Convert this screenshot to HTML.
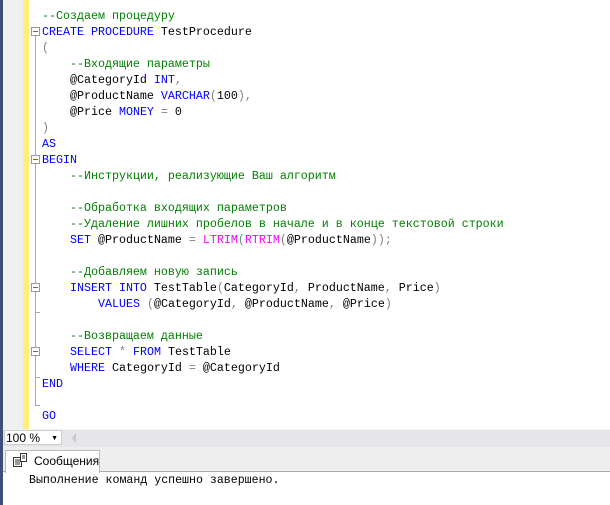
<!DOCTYPE html>
<html><head><meta charset="utf-8"><style>
body{margin:0;width:610px;height:505px;overflow:hidden;background:#fff;position:relative;font-family:"Liberation Mono",monospace}
.l{position:absolute;left:42px;height:16px;line-height:16px;font-size:11.67px;white-space:pre;color:#000}
.c{color:#008000}.k{color:#0000ff}.g{color:#808080}.m{color:#ff00ff}
.box{position:absolute;left:31px;width:7px;height:7px;border:1px solid #999;background:#fff}
.box:after{content:"";position:absolute;left:1px;top:3px;width:5px;height:1px;background:#666}
.tick{position:absolute;left:35px;width:5px;height:1px;background:#aaa}
</style></head><body>
<div style="position:absolute;left:0;top:0;width:3px;height:505px;background:#3b4f7a"></div>
<div style="position:absolute;left:3px;top:0;width:20px;height:430px;background:#f0f0f0"></div>
<div style="position:absolute;left:23px;top:0;width:6px;height:430px;background:#ffef7a"></div>
<div style="position:absolute;left:35px;top:36px;width:1px;height:370px;background:#aaa"></div>
<div class="tick" style="top:405px"></div>
<div class="tick" style="top:312px"></div>
<div class="tick" style="top:377px"></div>
<div class="box" style="top:27px"></div>
<div class="box" style="top:155px"></div>
<div class="box" style="top:283px"></div>
<div class="box" style="top:347px"></div>

<div class="l c" style="top:8px">--Создаем процедуру</div>
<div class="l" style="top:24px"><span class="k">CREATE PROCEDURE</span> TestProcedure</div>
<div class="l g" style="top:40px">(</div>
<div class="l c" style="top:56px">    --Входящие параметры</div>
<div class="l" style="top:72px">    @CategoryId <span class="k">INT</span><span class="g">,</span></div>
<div class="l" style="top:88px">    @ProductName <span class="k">VARCHAR</span><span class="g">(</span>100<span class="g">),</span></div>
<div class="l" style="top:104px">    @Price <span class="k">MONEY</span> <span class="g">=</span> 0</div>
<div class="l g" style="top:120px">)</div>
<div class="l k" style="top:136px">AS</div>
<div class="l k" style="top:152px">BEGIN</div>
<div class="l c" style="top:168px">    --Инструкции, реализующие Ваш алгоритм</div>
<div class="l c" style="top:200px">    --Обработка входящих параметров</div>
<div class="l c" style="top:216px">    --Удаление лишних пробелов в начале и в конце текстовой строки</div>
<div class="l" style="top:232px">    <span class="k">SET</span> @ProductName <span class="g">=</span> <span class="m">LTRIM</span><span class="g">(</span><span class="m">RTRIM</span><span class="g">(</span>@ProductName<span class="g">));</span></div>
<div class="l c" style="top:264px">    --Добавляем новую запись</div>
<div class="l" style="top:280px">    <span class="k">INSERT INTO</span> TestTable<span class="g">(</span>CategoryId<span class="g">,</span> ProductName<span class="g">,</span> Price<span class="g">)</span></div>
<div class="l" style="top:296px">        <span class="k">VALUES</span> <span class="g">(</span>@CategoryId<span class="g">,</span> @ProductName<span class="g">,</span> @Price<span class="g">)</span></div>
<div class="l c" style="top:328px">    --Возвращаем данные</div>
<div class="l" style="top:344px">    <span class="k">SELECT</span> <span class="g">*</span> <span class="k">FROM</span> TestTable</div>
<div class="l" style="top:360px">    <span class="k">WHERE</span> CategoryId <span class="g">=</span> @CategoryId</div>
<div class="l k" style="top:376px">END</div>
<div class="l k" style="top:408px">GO</div>

<div style="position:absolute;left:3px;top:429px;width:607px;height:18px;background:#e6e6ea;border-top:1px solid #f4f4f4"></div>
<div style="position:absolute;left:4px;top:430px;width:58px;height:15px;background:#fff;border:1px solid #ccc;font:12px 'Liberation Sans',sans-serif;line-height:15px;padding-left:1px;box-sizing:border-box">100 %<span style="position:absolute;right:3px;top:0;font-size:7px">▼</span></div>
<div style="position:absolute;left:72px;top:433px;width:0;height:0;border-top:5px solid transparent;border-bottom:5px solid transparent;border-right:4px solid #c8c8c8"></div>
<div style="position:absolute;left:3px;top:447px;width:607px;height:24px;background:#eeeeee;border-bottom:1px solid #aaa"></div>
<div style="position:absolute;left:5px;top:450px;width:95px;height:23px;background:#fff;border:1px solid #bbb;border-bottom:none;box-sizing:border-box"></div>
<svg style="position:absolute;left:12px;top:452px" width="16" height="16" viewBox="0 0 16 16"><rect x="1.5" y="5.5" width="8" height="9" fill="#fff" stroke="#333"/><path d="M3 8h5M3 10h5M3 12h5" stroke="#333"/><rect x="8.5" y="1.5" width="6" height="8" fill="#fff" stroke="#333"/><path d="M10 4h3M10 6h3" stroke="#333"/></svg>
<div style="position:absolute;left:34px;top:453px;font:12px 'Liberation Sans',sans-serif;line-height:16px">Сообщения</div>
<div style="position:absolute;left:29px;top:473px;font-size:11.6px;line-height:16px;font-family:'Liberation Mono',monospace;white-space:pre">Выполнение команд успешно завершено.</div>
</body></html>
